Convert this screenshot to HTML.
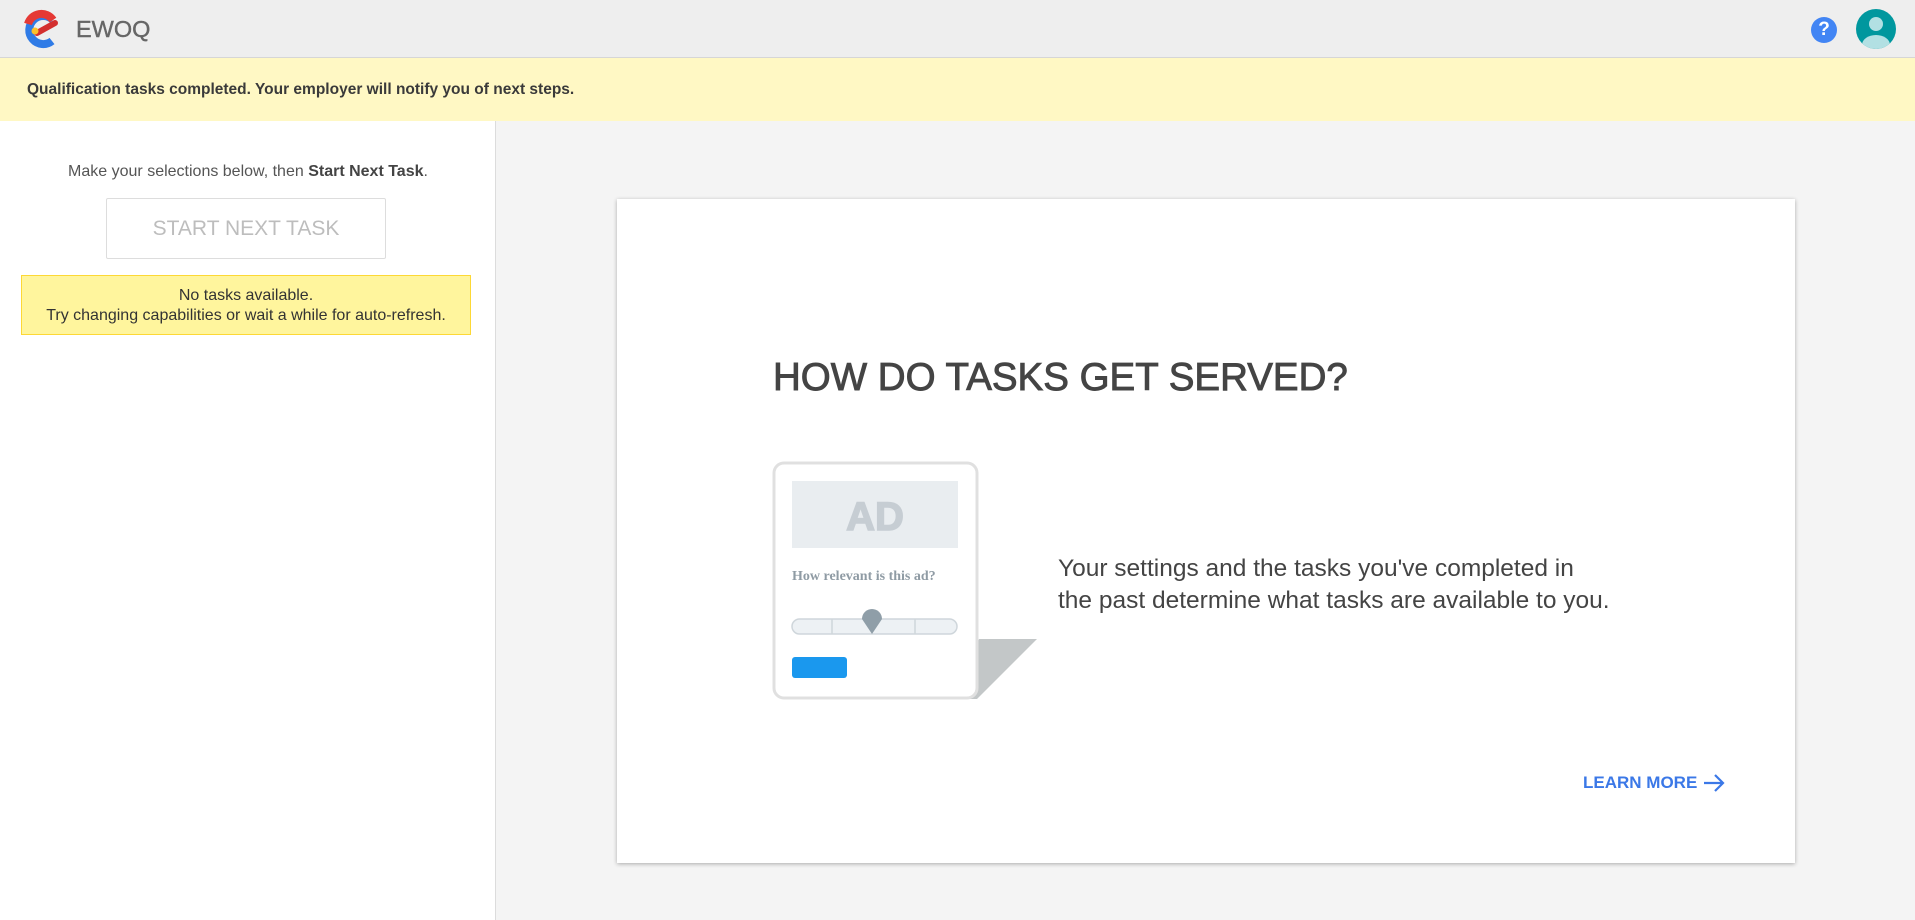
<!DOCTYPE html>
<html><head><meta charset="utf-8"><style>
*{box-sizing:border-box;margin:0;padding:0}
body{width:1915px;height:920px;overflow:hidden;background:#f4f4f4;font-family:"Liberation Sans",Roboto,sans-serif;position:relative}
.hdr{position:absolute;left:0;top:0;width:1915px;height:58px;background:#eeeeee;border-bottom:1px solid #d6d6d6}
.ban{position:absolute;left:0;top:58px;width:1915px;height:63px;background:#fff8c4;font-size:15.5px;font-weight:bold;color:#3a3a3a;padding:23px 0 0 27px}
.left{position:absolute;left:0;top:121px;width:496px;height:799px;background:#fff;border-right:1px solid #dcdcdc}
.card{position:absolute;left:617px;top:199px;width:1178px;height:664px;background:#fff;box-shadow:0 1px 4px rgba(0,0,0,.3)}
</style></head><body>
<div class="hdr">
<svg style="position:absolute;left:22px;top:9px" width="38" height="40" viewBox="0 0 38 40">
<path d="M31 11 A14 14 0 1 0 30 32" fill="none" stroke="#2f7be6" stroke-width="8"/>
<path d="M31 11 A14 14 0 0 0 6 15" fill="none" stroke="#e53935" stroke-width="8"/>
<path d="M15 24 L33 14" stroke="#d32f2f" stroke-width="6" stroke-linecap="round"/>
<circle cx="13" cy="22" r="3.5" fill="#fbc02d"/>
</svg>
<div style="position:absolute;left:76px;top:16px;font-size:23.5px;color:#666;-webkit-text-stroke:0.4px #666">EWOQ</div>
<div style="position:absolute;left:1811px;top:17px;width:26px;height:26px;border-radius:50%;background:#4285f4;color:#fff;font-weight:bold;font-size:19px;text-align:center;line-height:26px">?</div>
<svg style="position:absolute;left:1856px;top:9px" width="40" height="40" viewBox="0 0 40 40"><defs><clipPath id="c"><circle cx="20" cy="20" r="20"/></clipPath></defs><circle cx="20" cy="20" r="20" fill="#00979e"/><g clip-path="url(#c)" fill="#b2e0e3"><circle cx="20" cy="15" r="7"/><ellipse cx="20" cy="36" rx="14" ry="10"/></g></svg>
</div>
<div class="ban">Qualification tasks completed. Your employer will notify you of next steps.</div>
<div class="left">
<div style="position:absolute;left:0;width:496px;top:42px;text-align:center;font-size:16px;color:#555">Make your selections below, then <b style="color:#444">Start Next Task</b>.</div>
<div style="position:absolute;left:106px;top:77px;width:280px;height:61px;border:1px solid #ddd;border-radius:2px;text-align:center;line-height:59px;font-size:21px;color:#bdbdbd">START NEXT TASK</div>
<div style="position:absolute;left:21px;top:154px;width:450px;height:60px;background:#fff59d;border:1px solid #fdd835;text-align:center;font-size:16px;color:#333;padding-top:10px;line-height:20px">No tasks available.<br>Try changing capabilities or wait a while for auto-refresh.</div>
</div>
<div class="card">
<div style="position:absolute;left:156px;top:157px;font-size:38.5px;color:#444;-webkit-text-stroke:0.9px #444">HOW DO TASKS GET SERVED?</div>
<svg style="position:absolute;left:152px;top:260px" width="270" height="245" viewBox="152 260 270 245">
<path d="M362 440 L420 440 L360 500 L340 500 Z" fill="#c3c7c8"/>
<rect x="157" y="264" width="203" height="235" rx="10" fill="#fff" stroke="#e0e0e0" stroke-width="3"/>
<rect x="175" y="282" width="166" height="67" fill="#e9edf0"/>
<text x="258" y="331" text-anchor="middle" font-family="Liberation Sans,sans-serif" font-weight="bold" font-size="40" fill="#c6cdd3" stroke="#c6cdd3" stroke-width="1.5">AD</text>
<text x="175" y="381" font-family="Liberation Serif,serif" font-weight="bold" font-size="14" fill="#8f9ba4">How relevant is this ad?</text>
<rect x="175" y="420" width="165" height="15" rx="7.5" fill="#edf1f4" stroke="#cfd6db" stroke-width="1.5"/>
<line x1="215" y1="420" x2="215" y2="435" stroke="#cfd6db" stroke-width="1.5"/>
<line x1="298" y1="420" x2="298" y2="435" stroke="#cfd6db" stroke-width="1.5"/>
<path d="M255 435 L245 420 A10 10 0 1 1 265 420 Z" fill="#8f9ea8"/>
<rect x="175" y="458" width="55" height="21" rx="3" fill="#1a98ee"/>
</svg>
<div style="position:absolute;left:441px;top:354px;font-size:24.5px;color:#444;line-height:32px">Your settings and the tasks you've completed in<br>the past determine what tasks are available to you.</div>
<div style="position:absolute;left:966px;top:574px;font-size:17px;font-weight:bold;color:#3b78e7">LEARN MORE</div>
<svg style="position:absolute;left:1085px;top:573px" width="24" height="22" viewBox="0 0 24 22"><path d="M2 11 H21 M13 3 L21 11 L13 19" fill="none" stroke="#3b78e7" stroke-width="2.2"/></svg>
</div>
</body></html>
